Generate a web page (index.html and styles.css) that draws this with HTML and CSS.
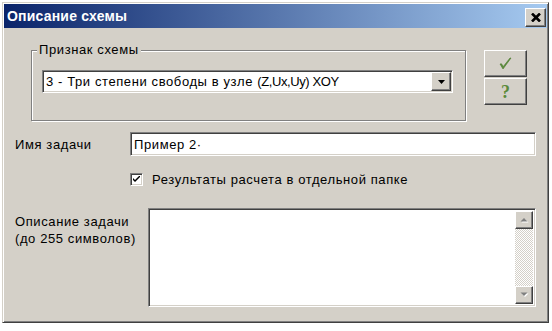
FILE: index.html
```html
<!DOCTYPE html>
<html lang="ru">
<head>
    <meta charset="UTF-8">
    <title>Описание схемы</title>
    <link rel="stylesheet" href="styles.css">
</head>
<body>

<div class="window">
    <div class="titlebar">
        <span class="title">Описание схемы</span>
        <button class="close-btn">
            <svg width="10" height="9" viewBox="0 0 10 9"><path d="M1 0.5 L9 8.5 M9 0.5 L1 8.5" stroke="#000" stroke-width="2.6"/></svg>
        </button>
    </div>

    <div class="client">
        <div class="top-row">
            <div class="group">
                <span class="group-label">Признак схемы</span>
                <div class="combo">
                    <span class="combo-text">3 - Три степени свободы в узле <span class="latin">(Z,Ux,Uy) XOY</span></span>
                    <span class="combo-btn">
                        <svg width="7" height="4" viewBox="0 0 7 4"><path d="M0 0 H7 L3.5 4 Z" fill="#000"/></svg>
                    </span>
                </div>
            </div>
            <div class="side-buttons">
                <button class="side-btn">
                    <!-- green check -->
                    <svg width="13" height="13" viewBox="0 0 13 13">
                        <path d="M1 7 L4 12 L12 1 L11 1 L4.3 9.5 L2.5 6.8 Z" fill="#5f8f3e" stroke="#4a7a2e" stroke-width="0.6"/>
                    </svg>
                </button>
                <button class="side-btn help-btn">?</button>
            </div>
        </div>

        <div class="field-row name-row">
            <label class="field-label">Имя задачи</label>
            <div class="text-field">Пример 2·</div>
        </div>

        <div class="check-row">
            <span class="check-box">
                <svg width="7" height="7" viewBox="0 0 7 7"><path d="M0 2 L0 4 L2 6 L7 1 L7 -1 L2 4 Z" fill="#000"/></svg>
            </span>
            <span class="check-label">Результаты расчета в отдельной папке</span>
        </div>

        <div class="field-row desc-row">
            <label class="field-label desc-label">Описание задачи<br>(до 255 символов)</label>
            <div class="memo">
                <div class="memo-body"></div>
                <div class="scrollbar">
                    <span class="scroll-btn">
                        <svg width="9" height="6" viewBox="0 0 9 6"><path d="M1.5 5.5 H8.5 L5 2 Z" fill="#fff"/><path d="M0.5 4.5 H7.5 L4 1 Z" fill="#808080"/></svg>
                    </span>
                    <span class="scroll-track"></span>
                    <span class="scroll-btn">
                        <svg width="9" height="6" viewBox="0 0 9 6"><path d="M1.5 1.5 H8.5 L5 5 Z" fill="#fff"/><path d="M0.5 0.5 H7.5 L4 4 Z" fill="#808080"/></svg>
                    </span>
                </div>
            </div>
        </div>
    </div>
</div>

</body>
</html>
```

FILE: styles.css
```css
* {
    margin: 0;
    padding: 0;
    box-sizing: border-box;
}
body {
    background-color: #fff;
    font-family: "Liberation Sans", Arial, sans-serif;
    font-size: 13px;
    letter-spacing: 0.6px;
    color: #000;
}
.window {
    margin: 2px 0 0 2px;
    width: 547px;
    height: 321px;
    background-color: #d4d0c8;
    border: 1px solid;
    border-color: #d4d0c8 #404040 #404040 #d4d0c8;
    box-shadow: inset 1px 1px 0 #fff, inset -1px -1px 0 #808080;
    padding: 1px;
    display: flex;
    flex-direction: column;
}

/* title bar */
.titlebar {
    height: 24px;
    display: flex;
    align-items: flex-end;
    justify-content: space-between;
    background: linear-gradient(to right, #0a246a, #a6caf0);
}
.title {
    align-self: center;
    padding-left: 3px;
    color: #fff;
    font-weight: bold;
    font-size: 14px;
    letter-spacing: 0.2px;
}
.close-btn {
    width: 21px;
    height: 19px;
    margin: 0 1px 1px 0;
    display: flex;
    align-items: center;
    justify-content: center;
}

/* classic raised button */
.close-btn,
.side-btn,
.combo-btn,
.scroll-btn {
    background-color: #d4d0c8;
    border: 1px solid;
    border-color: #fff #404040 #404040 #fff;
    box-shadow: inset -1px -1px 0 #808080;
}

.client {
    flex: 1;
    padding-top: 22px;
}

/* top row: group box + buttons */
.top-row {
    display: flex;
    align-items: flex-start;
}
.group {
    position: relative;
    margin-left: 27px;
    width: 435px;
    height: 71px;
    border: 1px solid #808080;
    box-shadow: 1px 1px 0 #fff, inset 1px 1px 0 #fff;
    padding: 19px 0 0 10px;
}
.group-label {
    position: absolute;
    top: -9px;
    left: 5px;
    padding: 0 2px;
    line-height: 16px;
    background-color: #d4d0c8;
}
.combo {
    width: 411px;
    height: 23px;
    display: flex;
    background-color: #fff;
}
.combo,
.text-field,
.check-box,
.memo {
    border: 1px solid;
    border-color: #808080 #fff #fff #808080;
    box-shadow: inset 1px 1px 0 #404040, inset -1px -1px 0 #d4d0c8;
}
.combo-text {
    flex: 1;
    padding: 2px 0 0 3px;
    line-height: 17px;
    white-space: nowrap;
}
.latin {
    letter-spacing: -0.4px;
}
.combo-btn {
    width: 20px;
    height: 19px;
    margin: 1px 1px 1px 0;
    display: flex;
    align-items: center;
    justify-content: center;
}
.side-buttons {
    margin-left: 18px;
    display: flex;
    flex-direction: column;
    gap: 1px;
}
.side-btn {
    width: 43px;
    height: 27px;
    display: flex;
    align-items: center;
    justify-content: center;
}
.help-btn {
    font-family: "Liberation Serif", serif;
    font-weight: bold;
    font-size: 18px;
    letter-spacing: 0;
    color: #5a8a3a;
    padding-top: 1px;
}

/* rows */
.field-row {
    display: flex;
    padding-left: 11px;
}
.name-row {
    margin-top: 11px;
    align-items: center;
}
.field-label {
    width: 115px;
}
.text-field {
    width: 406px;
    height: 24px;
    padding: 3px 0 0 3px;
    line-height: 17px;
    background-color: #fff;
}
.check-row {
    margin-top: 16px;
    padding-left: 126px;
    display: flex;
    align-items: center;
}
.check-box {
    width: 13px;
    height: 13px;
    background-color: #fff;
    display: flex;
    align-items: center;
    justify-content: center;
}
.check-label {
    margin-left: 9px;
}
.desc-row {
    margin-top: 21px;
}
.desc-label {
    width: 133px;
    padding-top: 5px;
    line-height: 17px;
}
.memo {
    width: 388px;
    height: 99px;
    padding: 2px;
    display: flex;
    background-color: #fff;
}
.memo-body {
    flex: 1;
}
.scrollbar {
    width: 18px;
    display: flex;
    flex-direction: column;
}
.scroll-btn {
    height: 18px;
    display: flex;
    align-items: center;
    justify-content: center;
}
.scroll-track {
    flex: 1;
    background-image: conic-gradient(#fff 25%, #d4d0c8 0 50%, #fff 0 75%, #d4d0c8 0);
    background-size: 2px 2px;
}
```
